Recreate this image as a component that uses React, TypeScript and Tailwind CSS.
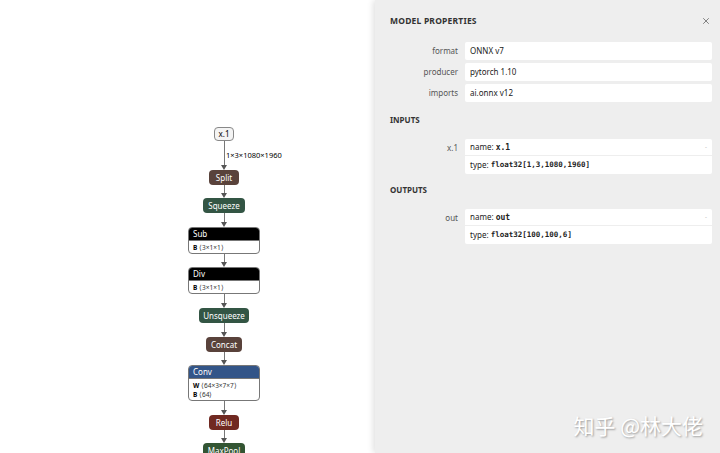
import { X } from "lucide-react";

const sans = { fontFamily: '"Noto Sans", "Open Sans", sans-serif' };

function Edge({ h }: { h: number }) {
  return (
    <div className="relative flex flex-col items-center" style={{ height: h }}>
      <div className="w-px flex-1 bg-[#777]" />
      <div className="w-0 h-0 border-l-[3px] border-r-[3px] border-t-[5px] border-l-transparent border-r-transparent border-t-[#555]" />
    </div>
  );
}

function Op({ name, color, px = "px-[7px]" }: { name: string; color: string; px?: string }) {
  return (
    <div className={`h-[15px] ${px} rounded-[4px] text-white text-[8px] leading-[15px] ${color}`}>{name}</div>
  );
}

function Block({ name, color, rows }: { name: string; color: string; rows: [string, string][] }) {
  return (
    <div className="w-[72px] rounded-[4px] border border-[#777] overflow-hidden bg-white">
      <div className={`h-[12px] px-[4px] text-white text-[8px] leading-[12px] ${color}`}>{name}</div>
      <div className="px-[4px] py-[1.5px] border-t border-[#777]">
        {rows.map(([k, v]) => (
          <div key={k} className="text-[6.5px] leading-[9px] text-black whitespace-nowrap">
            <span className="font-bold">{k}</span> <span className="text-[#333]">⟨{v}⟩</span>
          </div>
        ))}
      </div>
    </div>
  );
}

function Prop({ label, value }: { label: string; value: string }) {
  return (
    <div className="flex items-center">
      <div className="w-[82px] pr-[7px] text-right text-[8px] text-[#555]">{label}</div>
      <div className="flex-1 h-[18px] bg-white rounded-[2px] px-[5px] text-[8px] leading-[18px] text-[#222]">{value}</div>
    </div>
  );
}

function Arg({ label, name, type }: { label: string; name: string; type: string }) {
  return (
    <div className="flex items-start">
      <div className="w-[82px] pr-[7px] pt-[3px] text-right text-[8px] text-[#555]">{label}</div>
      <div className="flex-1 bg-white rounded-[2px] text-[8px] text-[#222]">
        <div className="h-[17px] px-[5px] flex items-center justify-between border-b border-[#eee]">
          <span>
            name: <span className="font-bold" style={{ fontFamily: '"DejaVu Sans Mono", monospace' }}>{name}</span>
          </span>
          <span className="text-[#aaa] text-[6px]">-</span>
        </div>
        <div className="h-[18px] px-[5px] flex items-center">
          type:&nbsp;
          <span className="font-bold text-[7.5px]" style={{ fontFamily: '"DejaVu Sans Mono", monospace' }}>{type}</span>
        </div>
      </div>
    </div>
  );
}

export default function App() {
  return (
    <div className="w-[720px] h-[453px] flex overflow-hidden bg-white" style={sans}>
      {/* Graph */}
      <div className="w-[375px] h-full pl-[188px] pt-[127px]">
        <div className="w-[72px] flex flex-col items-center">
          <div className="h-[14px] px-[4px] rounded-[4px] border border-[#888] bg-[#f4f4f4] text-[8px] leading-[12px] text-black">x.1</div>
          <div className="relative">
            <Edge h={29} />
            <div className="absolute left-[5px] top-[9px] text-[7.5px] whitespace-nowrap text-black">1×3×1080×1960</div>
          </div>
          <Op name="Split" color="bg-[#59423b]" />
          <Edge h={13} />
          <Op name="Squeeze" color="bg-[#335544]" px="px-[5px]" />
          <Edge h={14} />
          <Block name="Sub" color="bg-black" rows={[["B", "3×1×1"]]} />
          <Edge h={13} />
          <Block name="Div" color="bg-black" rows={[["B", "3×1×1"]]} />
          <Edge h={14} />
          <Op name="Unsqueeze" color="bg-[#335544]" px="px-[4px]" />
          <Edge h={14} />
          <Op name="Concat" color="bg-[#59423b]" px="px-[5px]" />
          <Edge h={13} />
          <Block name="Conv" color="bg-[#335588]" rows={[["W", "64×3×7×7"], ["B", "64"]]} />
          <Edge h={14} />
          <Op name="Relu" color="bg-[#702921]" />
          <Edge h={13} />
          <Op name="MaxPool" color="bg-[#335533]" px="px-[5px]" />
        </div>
      </div>

      {/* Properties sidebar */}
      <div className="relative flex-1 h-full bg-[#eeeeee] shadow-[-2px_0_6px_rgba(0,0,0,0.12)] pl-[8px] pr-[8px]">
        <div className="flex items-center justify-between pl-[7px] pt-[12px] h-[30px]">
          <span className="text-[8.5px] font-bold text-[#333] tracking-[0.2px]">MODEL PROPERTIES</span>
          <X size={10} strokeWidth={2.2} className="text-[#777] mr-[1px]" />
        </div>
        <div className="mt-[12px] flex flex-col gap-[3px]">
          <Prop label="format" value="ONNX v7" />
          <Prop label="producer" value="pytorch 1.10" />
          <Prop label="imports" value="ai.onnx v12" />
        </div>
        <div className="pl-[7px] mt-[13px] h-[10px] text-[8px] font-bold text-[#333] leading-[10px]">INPUTS</div>
        <div className="mt-[14px]">
          <Arg label="x.1" name="x.1" type="float32[1,3,1080,1960]" />
        </div>
        <div className="pl-[7px] mt-[11px] h-[10px] text-[8px] font-bold text-[#333] leading-[10px]">OUTPUTS</div>
        <div className="mt-[14px]">
          <Arg label="out" name="out" type="float32[100,100,6]" />
        </div>

        <div
          className="absolute right-[17px] bottom-[16px] text-[21px] leading-[24px] text-white"
          style={{ fontFamily: '"Noto Sans CJK SC", sans-serif', textShadow: "1px 1px 2px rgba(0,0,0,0.35)" }}
        >
          知乎 @林大佬
        </div>
      </div>
    </div>
  );
}
